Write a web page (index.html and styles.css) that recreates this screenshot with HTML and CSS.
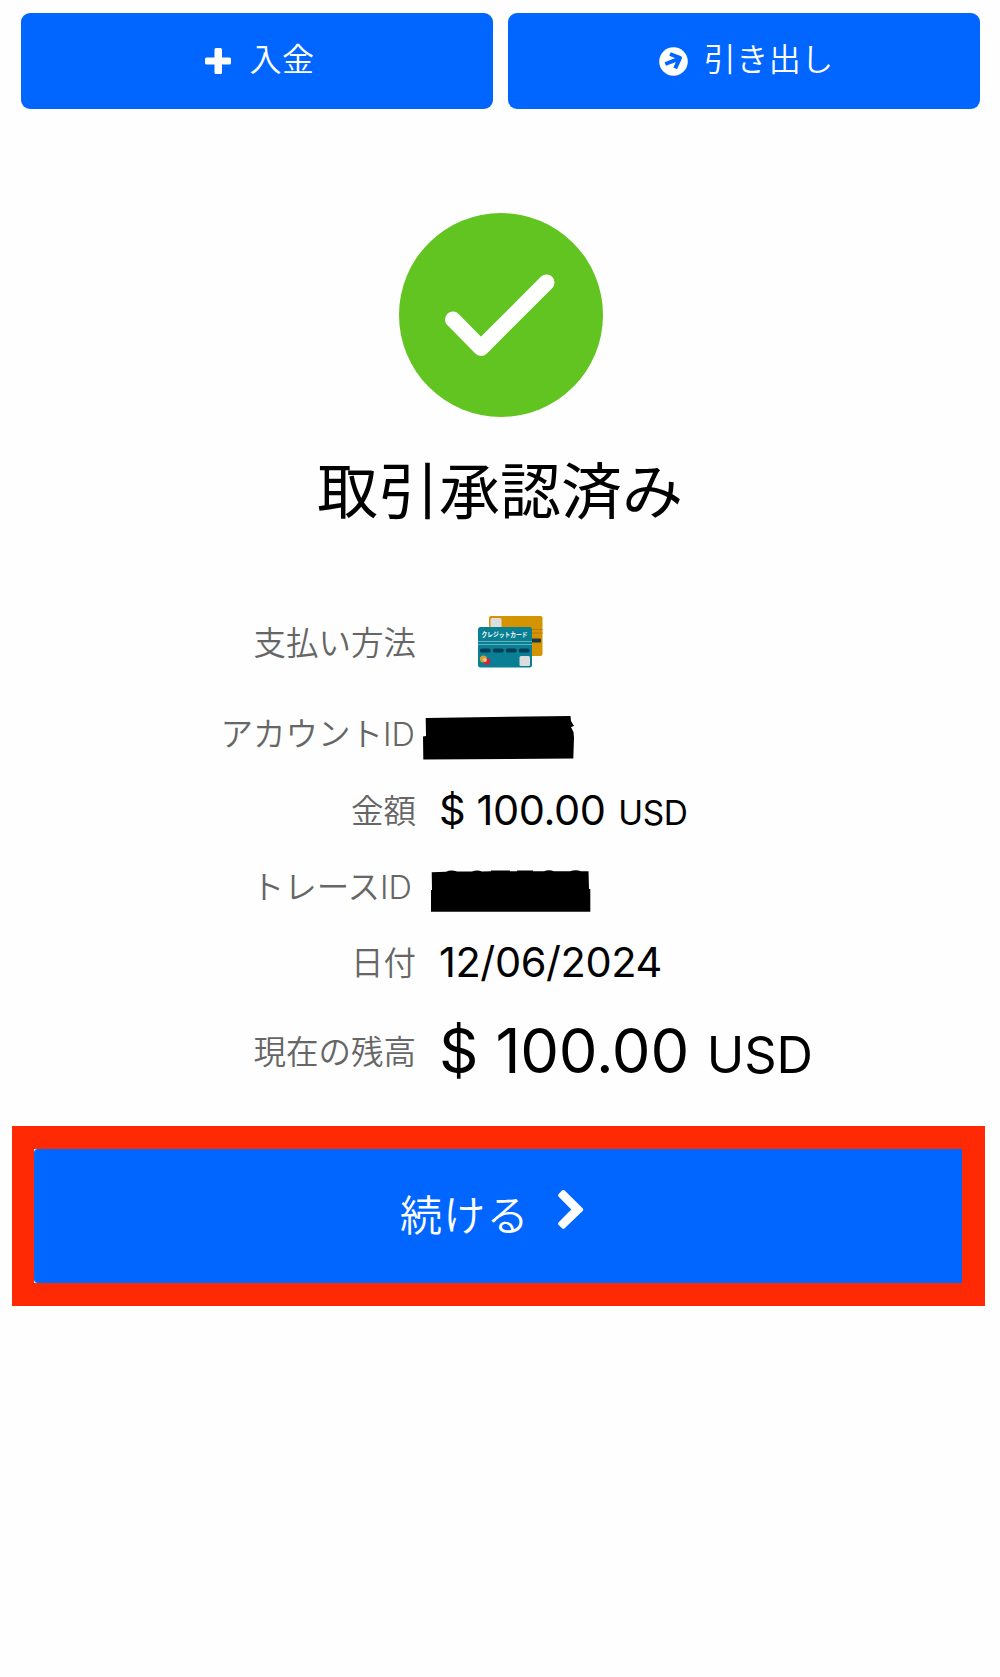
FILE: index.html
```html
<!DOCTYPE html>
<html lang="ja">
<head>
<meta charset="utf-8">
<title>取引承認済み</title>
<link rel="stylesheet" href="styles.css">
</head>
<body>
<nav class="tabs">
  <button class="tab tab-deposit">
    <svg class="icon-plus" width="26" height="26" viewBox="0 0 26 26"><path fill="#fff" d="M11 0h4.500a1.500 1.500 0 0 1 1.500 1.500V9.500h7.500a1.500 1.500 0 0 1 1.500 1.500v4a1.500 1.500 0 0 1-1.500 1.500H17v8a1.500 1.500 0 0 1-1.500 1.500H11a1.500 1.500 0 0 1-1.500-1.500v-8h-8A1.500 1.500 0 0 1 0 15v-4a1.500 1.500 0 0 1 1.500-1.500h8v-8A1.500 1.500 0 0 1 11 0z"/></svg>
    <span>入金</span>
  </button>
  <button class="tab tab-withdraw">
    <svg class="icon-arrow" width="29" height="29" viewBox="0 0 29 29"><circle cx="14.500" cy="14.500" r="14.300" fill="#fff"/><path d="M6.300 17L19 12.200M11 7L21 10.800L16.200 21.300" fill="none" stroke="#06f" stroke-width="4" stroke-linejoin="round"/></svg>
    <span>引き出し</span>
  </button>
</nav>
<main class="result">
  <svg class="badge" width="204" height="204" viewBox="0 0 204 204"><circle cx="102" cy="102" r="102" fill="#61c421"/><path d="M54 106.500L82 135L147.500 69.500" fill="none" stroke="#fff" stroke-width="16" stroke-linecap="round" stroke-linejoin="round"/></svg>
  <h1 class="title">取引承認済み</h1>
  <dl class="details">
    <div class="row row-method">
      <dt>支払い方法</dt>
      <dd>
        <svg class="cards" width="65" height="52" viewBox="0 0 65 52">
          <rect x="11" y="0" width="53.500" height="40" rx="2" fill="#d49400"/>
          <rect x="12.500" y="2" width="11" height="11" rx="1.500" fill="#ddd"/>
          <path d="M50 13.500h14.500M50 17h14.500" stroke="#b97619" stroke-width="1"/>
          <rect x="48" y="22.500" width="15" height="4" rx="1" fill="#17394a"/>
          <rect x="0" y="11" width="54" height="40.500" rx="2.500" fill="#087f93"/>
          <path d="M0 25.500h54M0 28.500h54" stroke="#65aebb" stroke-width="1"/>
          <path d="M3.800 34.500h7M16.800 34.500h7M29.800 34.500h7M42.800 34.500h7" stroke="#073c58" stroke-width="4" stroke-linecap="round"/>
          <circle cx="5.500" cy="43" r="3.600" fill="#d2a22c"/><circle cx="9" cy="45.500" r="3.300" fill="#d42238"/><circle cx="7" cy="44" r="1.900" fill="#f1c3a4"/>
          <rect x="41.500" y="40" width="10.500" height="10" rx="1.500" fill="#ddd"/>
          <text x="26.500" y="20.800" class="card-text" text-anchor="middle" textLength="46" lengthAdjust="spacingAndGlyphs">クレジットカード</text>
        </svg>
      </dd>
    </div>
    <div class="row row-account">
      <dt>アカウントID</dt>
      <dd><svg class="mask-account" width="152" height="44" viewBox="0 0 152 44"><path d="M2.700 2L147.500 0L148 5L151 10L148 11L150.500 16L151 22L150.300 42.500L.3 43.500L0 20.500L3 20z"/></svg></dd>
    </div>
    <div class="row row-amount">
      <dt>金額</dt>
      <dd><span class="amount">$ 100.00</span><span class="unit">USD</span></dd>
    </div>
    <div class="row row-trace">
      <dt>トレースID</dt>
      <dd><svg class="mask-trace" width="160" height="42" viewBox="0 0 160 42"><path d="M.7 2.300L15 1.800Q20-.5 26 1.600L41 1.500Q46-.5 51 1.400L60 1.300V.5H79V1.200H86V.5H102V1.200L113 1.200Q118-.5 123 1.200L139 1.200Q145-.5 150 1.200L157.500 1.200L158 19L159.300 19V41.700H0V20H1z"/></svg></dd>
    </div>
    <div class="row row-date">
      <dt>日付</dt>
      <dd><span class="date">12/06/2024</span></dd>
    </div>
    <div class="row row-balance">
      <dt>現在の残高</dt>
      <dd><span class="amount">$ 100.00</span><span class="unit">USD</span></dd>
    </div>
  </dl>
</main>
<div class="highlight">
  <button class="continue">
    <span>続ける</span>
    <svg class="chevron" width="26" height="40" viewBox="0 0 26 40"><path fill="#fff" d="M6.700.6L24.600 18.200a1.900 1.900 0 0 1 0 2.700L6.700 38.300a1.900 1.900 0 0 1-2.700 0L.7 35a1.900 1.900 0 0 1 0-2.700L13.300 19.500L.7 6.700a1.900 1.900 0 0 1 0-2.700L4 .6a1.900 1.900 0 0 1 2.700 0z"/></svg>
  </button>
</div>
</body>
</html>
```
FILE: styles.css
```css
* { box-sizing: border-box; }

body {
  margin: 0;
  min-height: 1677px;
  background: #fefefe;
  color: #000;
  font-family: Inter, "Noto Sans CJK JP", sans-serif;
}

svg { display: block; flex: none; }

button {
  border: 0;
  padding: 0;
  color: #fff;
  background: #06f;
  font-family: inherit;
  font-weight: 350;
  display: flex;
  align-items: center;
}

.tabs {
  display: grid;
  grid-template-columns: 1fr 1fr;
  gap: 15px;
  padding: 12.5px 20px 0 20.5px;
}

.tab {
  height: 96.5px;
  border-radius: 9px;
  font-size: 32px;
  letter-spacing: 0.5px;
  line-height: 48px;
  white-space: nowrap;
}

.tab-deposit { padding-left: 184.500px; gap: 18.500px; }
.tab-withdraw { padding-left: 151px; gap: 16px; }
.tab span { margin-top: -1px; }
.icon-arrow { margin-top: 2px; }

.result {
  display: flex;
  flex-direction: column;
  align-items: center;
  padding-top: 104px;
}

.badge { margin-left: 1px; }

.title {
  margin: 30px 0 0;
  height: 90px;
  line-height: 90px;
  font-size: 61px;
  font-weight: 400;
}

.details { margin: 66.500px 0 0; width: 100%; }

.row {
  display: grid;
  grid-template-columns: 416px 1fr;
  column-gap: 23px;
  align-items: center;
  height: 76px;
}

dt {
  padding-top: 5px;
  text-align: right;
  font-size: 32.500px;
  font-weight: 350;
  line-height: 48px;
  color: #666;
}

dd {
  margin: 0;
  display: flex;
  align-items: baseline;
  font-size: 41.500px;
  letter-spacing: -0.010em;
  line-height: 50px;
  white-space: nowrap;
}

.row-account { margin-top: 15px; }
.row-account dt { padding-right: 1px; }
.row-amount { margin-top: 1px; }
.row-amount dd { padding-top: 4px; }
.row-trace dt { padding-right: 4px; }
.row-date dd { padding-top: 1px; }
.row-balance { margin-top: 11px; }
.row-balance dt { padding-top: 3px; }
.row-balance dd { padding-top: 3px; font-size: 61.500px; line-height: 74px; letter-spacing: -0.003em; }

.amount, .date { font-weight: 380; }
.unit { font-size: 0.805em; font-weight: 380; margin-left: 0.380em; letter-spacing: -0.010em; }
.row-balance .unit { font-size: 0.820em; letter-spacing: 0; margin-left: 0.350em; }

.cards { margin-left: 38.500px; }
.card-text { font-size: 6.500px; font-weight: 700; fill: #fff; letter-spacing: 0; }
.mask-account { margin: 10px 0 0 -16px; }
.mask-trace { margin: 11px 0 0 -8px; }

.highlight {
  width: 973px;
  margin: 39px 0 0 12px;
  height: 180px;
  padding: 23px 22px 23px;
  background: linear-gradient(90deg, #fff 30px, #ff2a04 30px) 22px 23px / 60px 134px no-repeat, #ff2a04;
}

.continue {
  width: 928px;
  height: 134px;
  border-radius: 4px 0 0 4px;
  padding-left: 366px;
  gap: 28px;
  font-size: 42px;
  letter-spacing: 1.200px;
  line-height: 60px;
}

.chevron { margin-top: -11px; }
```
